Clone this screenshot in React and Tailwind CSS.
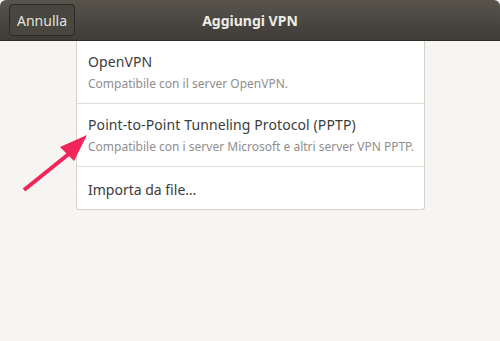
import React from 'react'

const rows = [
  { title: 'OpenVPN', sub: 'Compatibile con il server OpenVPN.' },
  { title: 'Point-to-Point Tunneling Protocol (PPTP)', sub: 'Compatibile con i server Microsoft e altri server VPN PPTP.' },
]

const App = () => {
  return (
    <div className="relative w-[500px] h-[341px] overflow-hidden bg-[#f6f5f4]" style={{ fontFamily: '"Noto Sans", "Open Sans", sans-serif' }}>
      {/* header bar */}
      <div className="flex items-center h-[41px] px-[9px] rounded-t-[6px] bg-gradient-to-b from-[#58544c] to-[#3e3c38] border-b border-[#2c2b28]">
        <button className="h-[32px] px-[7px] rounded-[4px] border border-[#2a2926] bg-[#48463f] text-[#e4e2de] text-[14px]">
          Annulla
        </button>
        <div className="flex-1 text-center pr-[66px] text-[#eeece8] text-[14px] font-bold">Aggiungi VPN</div>
      </div>

      <div className="pl-[76px]">
        <div className="w-[349px] bg-white border border-t-0 border-[#d6d2cd] rounded-b-[3px]">
          {rows.map((r) => (
            <div key={r.title} className="h-[63px] px-[11px] pt-[11px] border-b border-[#e0ddd9]">
              <div className="text-[14px] text-[#3c3c3c] leading-[19px] whitespace-nowrap tracking-[0.1px]">{r.title}</div>
              <div className="mt-[4px] text-[12px] text-[#8e8e8e] leading-[17px] whitespace-nowrap">{r.sub}</div>
            </div>
          ))}
          <div className="h-[42px] px-[11px] pt-[2px] flex items-center text-[14px] text-[#3c3c3c]">Importa da file…</div>
        </div>
      </div>

      {/* annotation arrow */}
      <svg className="absolute left-0 top-0" width="500" height="341">
        <line x1="24" y1="190" x2="70" y2="153" stroke="#f2245a" strokeWidth="4" strokeLinecap="butt" />
        <polygon points="87,135 60,147 74,161" fill="#f2245a" />
      </svg>
    </div>
  )
}

export default App
